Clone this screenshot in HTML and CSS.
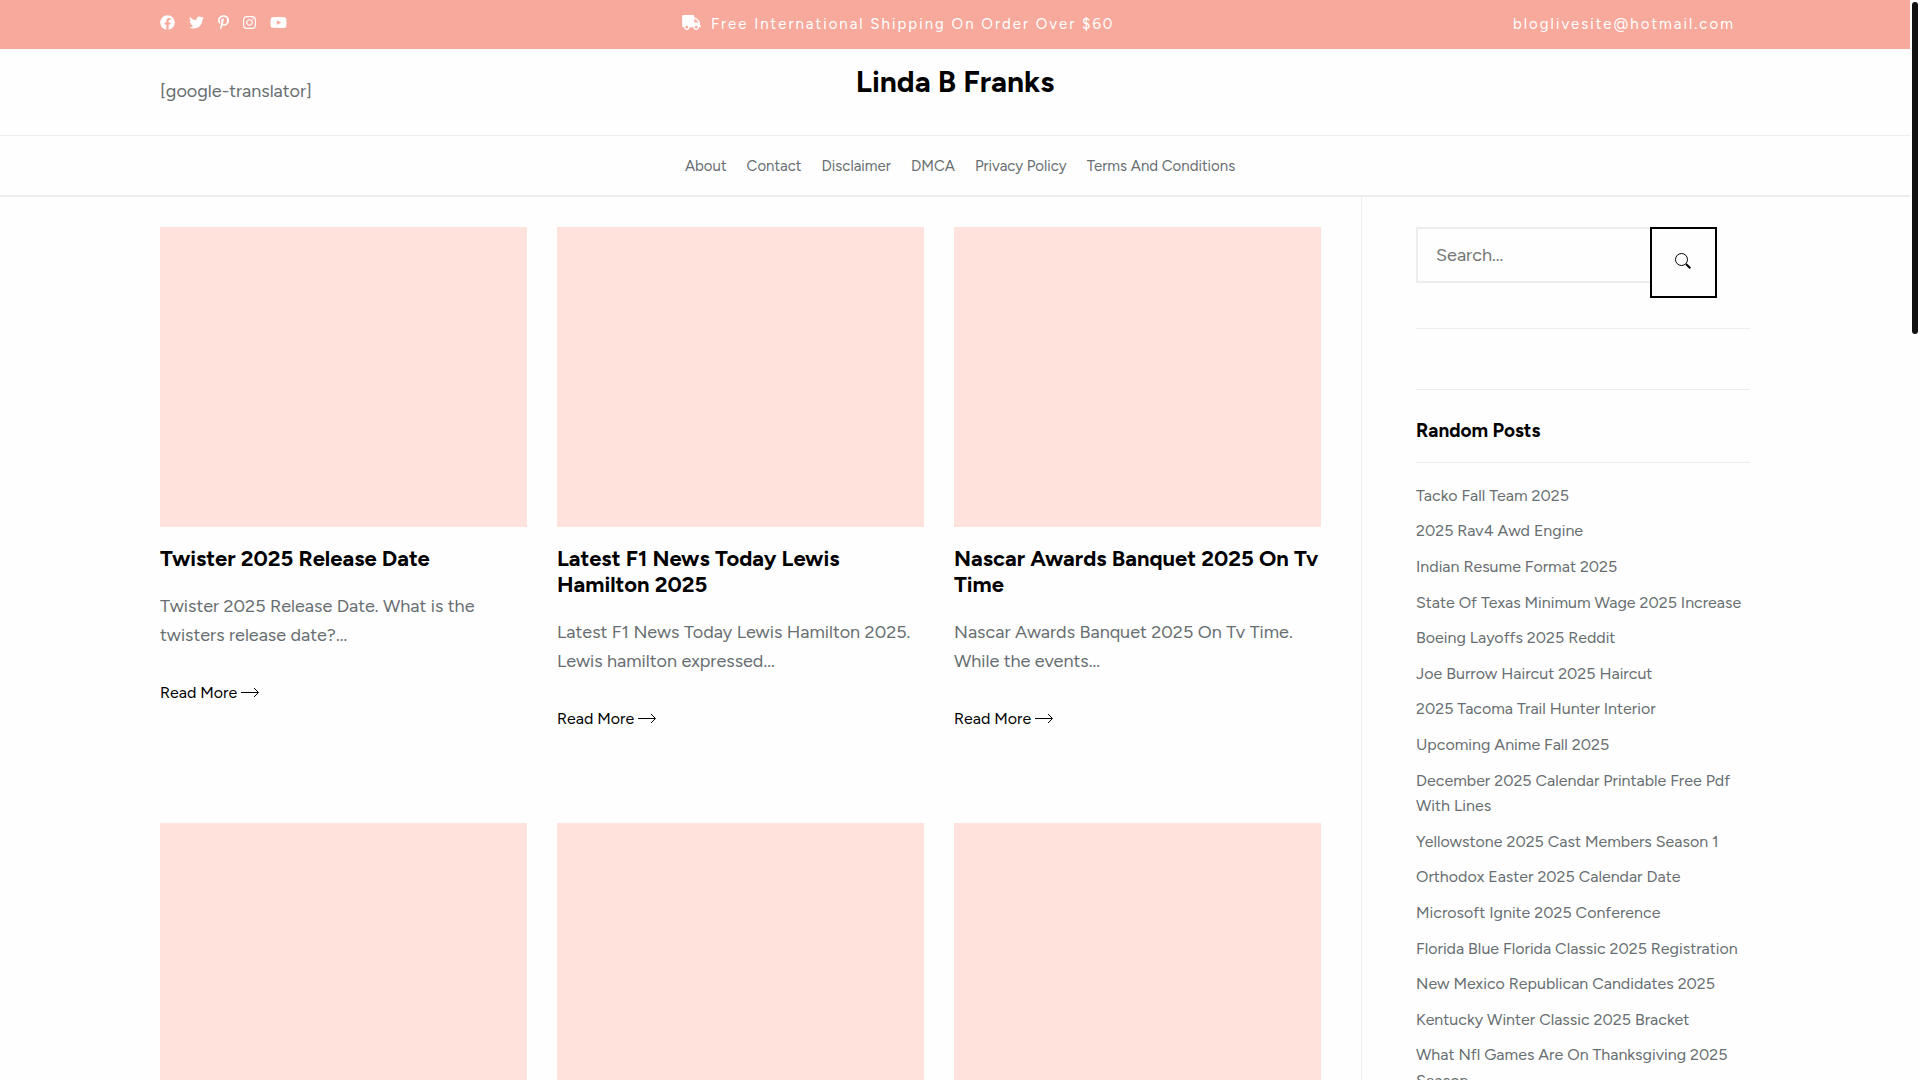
FILE: index.html
```html
<!DOCTYPE html>
<html lang="en">
<head>
<meta charset="utf-8">
<meta name="viewport" content="width=device-width, initial-scale=1">
<title>Linda B Franks</title>
<link rel="stylesheet" href="styles.css">
</head>
<body>
<svg class="sprite" aria-hidden="true">
  <symbol id="arrow" viewBox="0 0 18 11"><path d="M0 5.5h17M13 1l4.5 4.5L13 10" fill="none" stroke="currentColor"/></symbol>
</svg>
<div class="page">
  <div class="topbar">
    <div class="container topbar-row">
      <ul class="social">
        <li><a href="#" aria-label="Facebook"><svg viewBox="0 0 512 512" width="15" height="15"><path d="M504 256C504 119 393 8 256 8S8 119 8 256c0 123.780 90.690 226.380 209.250 245V327.690h-63V256h63v-54.640c0-62.150 37-96.480 93.670-96.480 27.140 0 55.520 4.840 55.520 4.840v61h-31.280c-30.800 0-40.410 19.120-40.410 38.730V256h68.780l-11 71.690h-57.780V501C413.310 482.380 504 379.780 504 256z"/></svg></a></li>
        <li><a href="#" aria-label="Twitter"><svg viewBox="0 0 512 512" width="15" height="15"><path d="M459.370 151.716c.325 4.548.325 9.097.325 13.645 0 138.720-105.583 298.558-298.558 298.558-59.452 0-114.680-17.219-161.137-47.106 8.447.974 16.568 1.299 25.340 1.299 49.055 0 94.213-16.568 130.274-44.832-46.132-.975-84.792-31.188-98.112-72.772 6.498.974 12.995 1.624 19.818 1.624 9.421 0 18.843-1.300 27.614-3.573-48.081-9.747-84.143-51.980-84.143-102.985v-1.299c13.969 7.797 30.214 12.670 47.431 13.319-28.264-18.843-46.781-51.005-46.781-87.391 0-19.492 5.197-37.360 14.294-52.954 51.655 63.675 129.300 105.258 216.365 109.807-1.624-7.797-2.599-15.918-2.599-24.040 0-57.828 46.782-104.934 104.934-104.934 30.213 0 57.502 12.670 76.670 33.137 23.715-4.548 46.456-13.320 66.599-25.340-7.798 24.366-24.366 44.833-46.132 57.827 21.117-2.273 41.584-8.122 60.426-16.243-14.292 20.791-32.161 39.308-52.628 54.253z"/></svg></a></li>
        <li><a href="#" aria-label="Pinterest"><svg viewBox="0 0 384 512" width="11" height="15"><path d="M204 6.500C101.400 6.500 0 74.900 0 185.600 0 256 39.600 296 63.600 296c9.900 0 15.600-27.600 15.600-35.400 0-9.300-23.700-29.100-23.700-67.800 0-80.400 61.200-137.400 140.400-137.400 68.100 0 118.500 38.700 118.500 109.800 0 53.100-21.300 152.700-90.300 152.700-24.900 0-46.200-18-46.200-43.800 0-37.800 26.400-74.400 26.400-113.400 0-66.200-93.900-54.200-93.900 25.800 0 16.800 2.100 35.400 9.600 50.700-13.800 59.400-42 147.900-42 209.100 0 18.900 2.700 37.500 4.500 56.400 3.400 3.800 1.700 3.400 6.900 1.500 50.400-69 48.600-82.500 71.400-172.800 12.300 23.400 44.100 36 69.300 36 106.200 0 153.900-103.500 153.900-196.800C384 71.300 298.200 6.500 204 6.500z"/></svg></a></li>
        <li><a href="#" aria-label="Instagram"><svg viewBox="0 0 448 512" width="13" height="15"><path d="M224.100 141c-63.600 0-114.900 51.300-114.900 114.900s51.300 114.900 114.900 114.900S339 319.500 339 255.900 287.700 141 224.100 141zm0 189.600c-41.100 0-74.700-33.500-74.700-74.700s33.500-74.700 74.700-74.700 74.700 33.500 74.700 74.700-33.600 74.700-74.700 74.700zm146.400-194.300c0 14.900-12 26.800-26.800 26.800-14.900 0-26.800-12-26.800-26.800s12-26.800 26.800-26.800 26.800 12 26.800 26.800zm76.100 27.200c-1.700-35.900-9.900-67.700-36.200-93.900-26.200-26.200-58-34.400-93.900-36.200-37-2.100-147.900-2.100-184.900 0-35.800 1.700-67.600 9.900-93.900 36.100s-34.400 58-36.200 93.900c-2.100 37-2.100 147.900 0 184.900 1.700 35.900 9.900 67.700 36.200 93.900s58 34.400 93.900 36.200c37 2.100 147.900 2.100 184.900 0 35.900-1.700 67.700-9.900 93.900-36.200 26.200-26.200 34.400-58 36.200-93.900 2.100-37 2.100-147.800 0-184.800zM398.800 388c-7.800 19.600-22.900 34.700-42.600 42.600-29.500 11.700-99.500 9-132.100 9s-102.700 2.600-132.100-9c-19.600-7.800-34.700-22.900-42.600-42.600-11.700-29.500-9-99.500-9-132.100s-2.600-102.700 9-132.100c7.800-19.600 22.900-34.700 42.600-42.600 29.500-11.700 99.500-9 132.100-9s102.700-2.600 132.100 9c19.600 7.800 34.700 22.900 42.600 42.600 11.700 29.500 9 99.500 9 132.100s2.700 102.700-9 132.100z"/></svg></a></li>
        <li><a href="#" aria-label="YouTube"><svg viewBox="0 0 576 512" width="17" height="15"><path d="M549.655 124.083c-6.281-23.650-24.787-42.276-48.284-48.597C458.781 64 288 64 288 64S117.220 64 74.629 75.486c-23.497 6.322-42.003 24.947-48.284 48.597-11.412 42.867-11.412 132.305-11.412 132.305s0 89.438 11.412 132.305c6.281 23.650 24.787 41.500 48.284 47.821C117.220 448 288 448 288 448s170.780 0 213.371-11.486c23.497-6.321 42.003-24.171 48.284-47.821 11.412-42.867 11.412-132.305 11.412-132.305s0-89.438-11.412-132.305zm-317.510 213.508V175.185l142.739 81.205-142.739 81.201z"/></svg></a></li>
      </ul>
      <p class="notice"><svg viewBox="0 0 640 512" width="19" height="15" aria-hidden="true"><path d="M624 352h-16V243.900c0-12.700-5.100-24.900-14.100-33.900L494 110.100c-9-9-21.200-14.100-33.900-14.100H416V48c0-26.500-21.500-48-48-48H48C21.500 0 0 21.500 0 48v320c0 26.500 21.500 48 48 48h16c0 53 43 96 96 96s96-43 96-96h128c0 53 43 96 96 96s96-43 96-96h48c8.800 0 16-7.200 16-16v-32c0-8.800-7.200-16-16-16zM160 464c-26.500 0-48-21.500-48-48s21.500-48 48-48 48 21.500 48 48-21.500 48-48 48zm320 0c-26.500 0-48-21.500-48-48s21.500-48 48-48 48 21.500 48 48-21.500 48-48 48zm80-208H416V144h44.100l99.900 99.900V256z"/></svg>Free International Shipping On Order Over $60</p>
      <a class="mail" href="mailto:bloglivesite@hotmail.com">bloglivesite@hotmail.com</a>
    </div>
  </div>
  <header class="header">
    <div class="container header-row">
      <p class="translator">[google-translator]</p>
      <h1 class="site-title"><a href="#">Linda B Franks</a></h1>
    </div>
  </header>
  <nav class="nav">
    <ul class="container nav-list">
      <li><a href="#">About</a></li>
      <li><a href="#">Contact</a></li>
      <li><a href="#">Disclaimer</a></li>
      <li><a href="#">DMCA</a></li>
      <li><a href="#">Privacy Policy</a></li>
      <li><a href="#">Terms And Conditions</a></li>
    </ul>
  </nav>
  <div class="container layout">
    <main class="posts">
      <article class="post">
        <div class="thumb"></div>
        <h2><a href="#">Twister 2025 Release Date</a></h2>
        <p>Twister 2025 Release Date. What is the twisters release date?...</p>
        <a class="more" href="#">Read More <svg width="18" height="11" aria-hidden="true"><use href="#arrow"/></svg></a>
      </article>
      <article class="post">
        <div class="thumb"></div>
        <h2><a href="#">Latest F1 News Today Lewis Hamilton 2025</a></h2>
        <p>Latest F1 News Today Lewis Hamilton 2025. Lewis hamilton expressed...</p>
        <a class="more" href="#">Read More <svg width="18" height="11" aria-hidden="true"><use href="#arrow"/></svg></a>
      </article>
      <article class="post">
        <div class="thumb"></div>
        <h2><a href="#">Nascar Awards Banquet 2025 On Tv Time</a></h2>
        <p>Nascar Awards Banquet 2025 On Tv Time. While the events...</p>
        <a class="more" href="#">Read More <svg width="18" height="11" aria-hidden="true"><use href="#arrow"/></svg></a>
      </article>
      <article class="post"><div class="thumb"></div></article>
      <article class="post"><div class="thumb"></div></article>
      <article class="post"><div class="thumb"></div></article>
    </main>
    <aside class="sidebar">
      <form class="widget search">
        <input type="search" placeholder="Search..." aria-label="Search">
        <button type="submit" aria-label="Search"><svg viewBox="0 0 16 16" width="16" height="16" fill="none" stroke="currentColor"><circle cx="6.500" cy="6.500" r="6"/><path d="M11 11l4.300 4.300" stroke-width="2"/></svg></button>
      </form>
      <div class="widget"></div>
      <section>
        <h2 class="widget-title">Random Posts</h2>
        <ul class="links">
          <li><a href="#">Tacko Fall Team 2025</a></li>
          <li><a href="#">2025 Rav4 Awd Engine</a></li>
          <li><a href="#">Indian Resume Format 2025</a></li>
          <li><a href="#">State Of Texas Minimum Wage 2025 Increase</a></li>
          <li><a href="#">Boeing Layoffs 2025 Reddit</a></li>
          <li><a href="#">Joe Burrow Haircut 2025 Haircut</a></li>
          <li><a href="#">2025 Tacoma Trail Hunter Interior</a></li>
          <li><a href="#">Upcoming Anime Fall 2025</a></li>
          <li><a href="#">December 2025 Calendar Printable Free Pdf With Lines</a></li>
          <li><a href="#">Yellowstone 2025 Cast Members Season 1</a></li>
          <li><a href="#">Orthodox Easter 2025 Calendar Date</a></li>
          <li><a href="#">Microsoft Ignite 2025 Conference</a></li>
          <li><a href="#">Florida Blue Florida Classic 2025 Registration</a></li>
          <li><a href="#">New Mexico Republican Candidates 2025</a></li>
          <li><a href="#">Kentucky Winter Classic 2025 Bracket</a></li>
          <li><a href="#">What Nfl Games Are On Thanksgiving 2025 Season</a></li>
        </ul>
      </section>
    </aside>
  </div>
</div>
<div class="scroll-thumb" aria-hidden="true"></div>
</body>
</html>
```
FILE: styles.css
```css
:root {
  --accent: #f7a99c;
  --blush: #ffe2dc;
  --line: #ededed;
  --text: #686e71;
}

* { box-sizing: border-box; }

body {
  margin: 0;
  padding-right: 10px;
  background: #fefefe;
  color: var(--text);
  font: 18px/1.6 Figtree, Roboto, sans-serif;
}

h1, h2, p, ul { margin: 0; padding: 0; }
ul { list-style: none; }
a { color: inherit; text-decoration: none; }

.sprite { display: none; }

.page {
  height: 100vh;
  overflow-y: auto;
  scrollbar-width: none;
}

.container {
  width: calc(100% - 40px);
  max-width: 1590px;
  margin: 0 auto;
}

.topbar {
  background: var(--accent);
  color: #fff;
  font-size: 15px;
  line-height: 19px;
  letter-spacing: 2px;
}

.topbar svg { display: block; fill: currentColor; }

.topbar-row {
  display: grid;
  grid-template-columns: 522fr 831fr 237fr;
  padding: 15px 0;
}

.social { display: flex; gap: 14px; }
.notice { display: flex; gap: 10px; }

.header { border-bottom: 1px solid var(--line); }

.header-row {
  display: grid;
  grid-template-columns: 1fr auto 1fr;
  align-items: start;
  padding: 15px 0 29px;
}

.translator { padding-top: 13px; }

.site-title {
  color: #000;
  font-size: 30px;
  line-height: 36px;
}

.nav { border-bottom: 2px solid var(--line); }

.nav-list {
  display: flex;
  flex-wrap: wrap;
  justify-content: center;
  gap: 0 20px;
  padding: 18px 0 17px 10px;
  font-size: 15px;
  line-height: 24px;
}

.layout {
  display: grid;
  grid-template-columns: minmax(0, 1201fr) minmax(0, 389fr);
}

.posts {
  display: grid;
  grid-template-columns: repeat(3, minmax(0, 1fr));
  align-content: start;
  gap: 92px 30px;
  padding: 30px 40px 0 0;
}

.thumb { height: 300px; background: var(--blush); }

.post h2 {
  margin: 19px 0 20px;
  color: #000;
  font-size: 22px;
  line-height: 26px;
}

.post p { margin-bottom: 32px; }

.more {
  display: block;
  color: #000;
  font-size: 16px;
  line-height: 24px;
}

.sidebar {
  border-left: 1px solid var(--line);
  padding: 30px 0 30px 54px;
}

.widget {
  padding: 30px 0;
  border-bottom: 1px solid var(--line);
}

.search {
  display: flex;
  align-items: flex-start;
  padding: 0 33px 30px 0;
}

.search input {
  flex: 1;
  min-width: 0;
  height: 56px;
  padding: 0 18px;
  border: 2px solid var(--line);
  border-right: 0;
  border-radius: 0;
  background: transparent;
  color: var(--text);
  font: inherit;
  appearance: none;
}

.search input::placeholder { color: #757575; }

.search button {
  display: grid;
  place-items: center;
  width: 67px;
  height: 71px;
  padding: 0 2px 2px 0;
  border: 2px solid #000;
  background: transparent;
  color: #000;
}

.widget-title {
  padding: 29px 0 19px;
  border-bottom: 1px solid var(--line);
  color: #000;
  font-size: 19px;
  line-height: 24px;
}

.links {
  display: grid;
  gap: 10px;
  padding-top: 20px;
  font-size: 16px;
}

.scroll-thumb {
  position: fixed;
  top: 2px;
  right: 2px;
  width: 6px;
  height: 332px;
  border-radius: 3px;
  background: #111;
}
```
